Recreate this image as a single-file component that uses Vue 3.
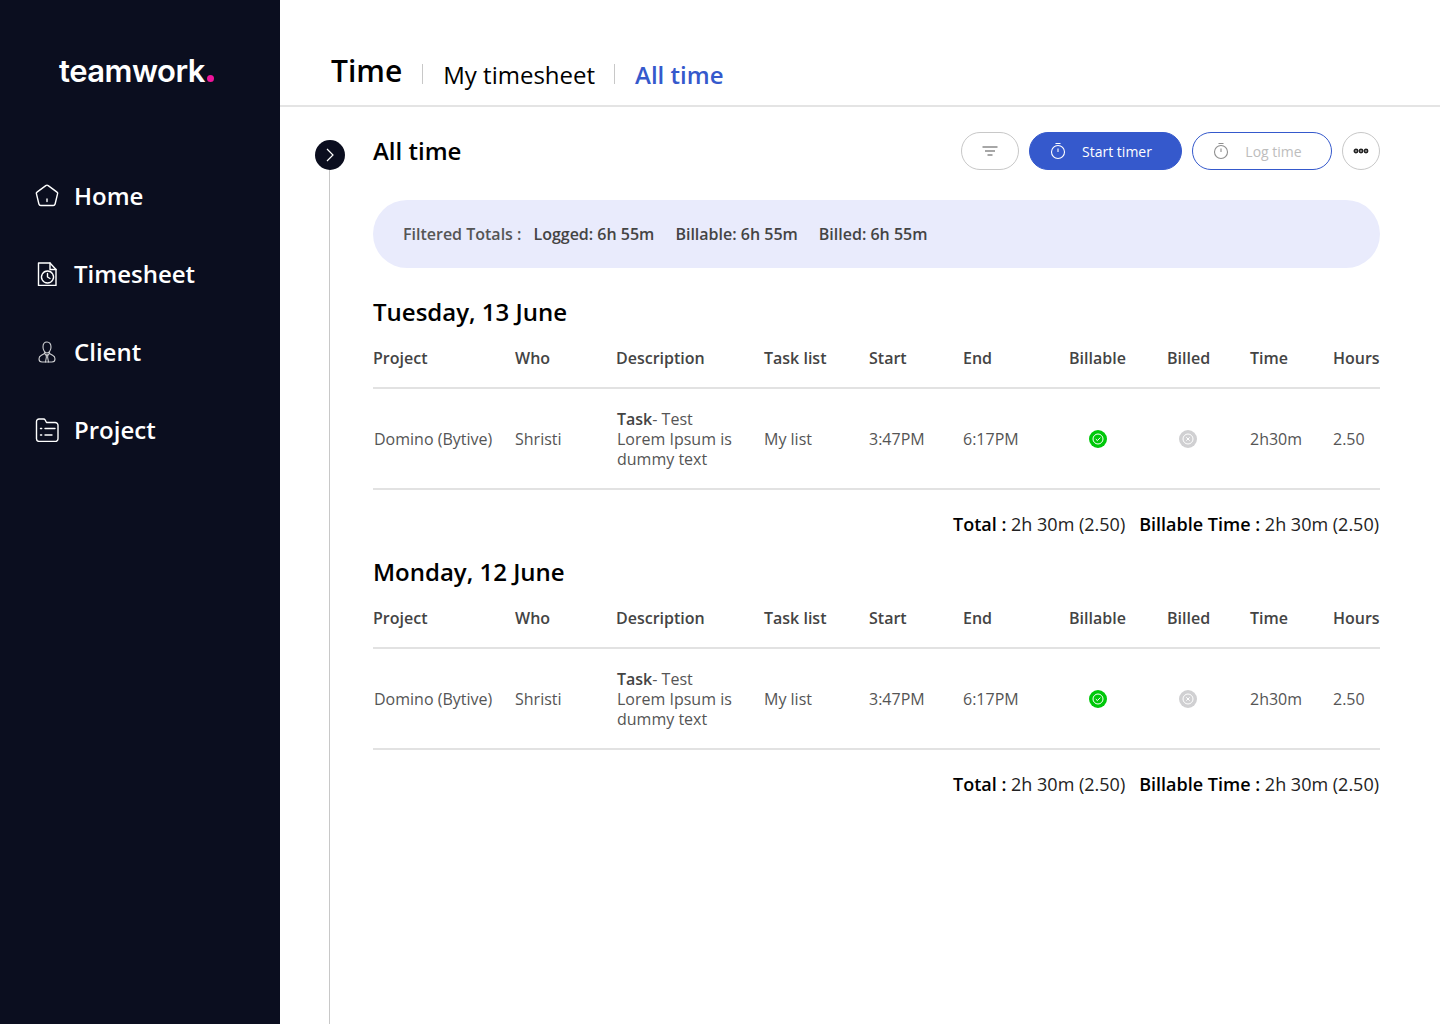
<template>
  <div class="page">
    <aside class="sidebar">
      <div class="logo">teamwork<span class="dot"></span></div>
      <nav class="nav">
        <a v-for="link in links" :key="link.name" class="nav_item">
          <svg class="nav_icon" :class="{ nav_icon_thin: link.thin }" viewBox="0 0 24 24" fill="none" stroke="#fff" stroke-linejoin="round" stroke-linecap="round">
            <path v-for="d in link.paths" :key="d" :d="d" />
          </svg>
          <span class="nav_label">{{ link.name }}</span>
        </a>
      </nav>
    </aside>

    <main class="main">
      <header class="top">
        <h1>Time</h1>
        <span class="tab tab_first">My timesheet</span>
        <span class="tab tab_active">All time</span>
      </header>

      <div class="body">
        <div class="rail">
          <div class="rail_btn">
            <svg width="10" height="14" viewBox="0 0 10 14" fill="none" stroke="#fff" stroke-width="1.2">
              <path d="M2 1l6 6-6 6" />
            </svg>
          </div>
          <div class="rail_line"></div>
        </div>

        <div class="content">
          <div class="title_row">
            <h2>All time</h2>
            <div class="actions">
              <button class="btn btn_filter">
                <svg width="16" height="12" viewBox="0 0 16 12" fill="none" stroke="#8a8a8a" stroke-width="1.3">
                  <path d="M.5 2h15M3 6h10M5.500 10h5" />
                </svg>
              </button>
              <button class="btn btn_start">
                <svg width="16" height="18" viewBox="0 0 16 18" fill="none" stroke="#fff" stroke-width="1.1">
                  <circle cx="8" cy="10" r="6.500" />
                  <path d="M5.500 1.500h5M8 6.500v3.500" />
                </svg>
                <span>Start timer</span>
              </button>
              <button class="btn btn_log">
                <svg width="16" height="18" viewBox="0 0 16 18" fill="none" stroke="#8f8f8f" stroke-width="1.1">
                  <circle cx="8" cy="10" r="6.500" />
                  <path d="M5.500 1.500h5M8 6.500v3.500" />
                </svg>
                <span>Log time</span>
              </button>
              <button class="btn btn_more">
                <svg width="16" height="6" viewBox="0 0 16 6" fill="none" stroke="#222" stroke-width="1.700">
                  <circle cx="3" cy="3" r="1.600" />
                  <circle cx="8" cy="3" r="1.600" />
                  <circle cx="13" cy="3" r="1.600" />
                </svg>
              </button>
            </div>
          </div>

          <div class="totals">
            <span class="totals_label">Filtered Totals :</span>
            <span class="totals_val">Logged: 6h 55m</span>
            <span class="totals_val">Billable: 6h 55m</span>
            <span class="totals_val">Billed: 6h 55m</span>
          </div>

          <section v-for="day in days" :key="day" class="day">
            <h3>{{ day }}</h3>
            <div class="grid head">
              <div v-for="col in columns" :key="col">{{ col }}</div>
            </div>
            <div class="grid row">
              <div class="c1">Domino (Bytive)</div>
              <div>Shristi</div>
              <div class="desc"><b>Task</b>- Test<br>Lorem Ipsum is<br>dummy text</div>
              <div>My list</div>
              <div>3:47PM</div>
              <div>6:17PM</div>
              <div class="status status_yes">
                <svg width="18" height="18" viewBox="0 0 18 18" fill="none">
                  <circle cx="9" cy="9" r="9" fill="#00c80a" />
                  <circle cx="9" cy="9" r="5" stroke="#fff" stroke-width="1" />
                  <path d="M6.800 9.100l1.600 1.500 2.900-3" stroke="#fff" stroke-width="1" />
                </svg>
              </div>
              <div class="status status_no">
                <svg width="18" height="18" viewBox="0 0 18 18" fill="none">
                  <circle cx="9" cy="9" r="9" fill="#d0d0d2" />
                  <circle cx="9" cy="9" r="5" stroke="#fff" stroke-width="1" />
                  <path d="M7.300 7.300l3.400 3.400M10.700 7.300l-3.400 3.400" stroke="#fff" stroke-width="1" />
                </svg>
              </div>
              <div>2h30m</div>
              <div>2.50</div>
            </div>
            <div class="day_total">
              <span><b>Total :</b> 2h 30m (2.50)</span>
              <span><b>Billable Time :</b> 2h 30m (2.50)</span>
            </div>
          </section>
        </div>
      </div>
    </main>
  </div>
</template>

<script setup>
const links = [
  { name: "Home", paths: ["M10.800 1.600a2 2 0 0 1 2.400 0l8.800 6.500a1.500 1.500 0 0 1 .6 1.600l-2.500 10.300A2 2 0 0 1 18.200 21.500H5.800a2 2 0 0 1-1.900-1.500L1.400 9.700a1.500 1.500 0 0 1 .6-1.600z", "M12 15v2.500"] },
  { name: "Timesheet", paths: ["M3.500 1h11.500l6 6.500V23.500H3.500z", "M15 1v6.500h6", "M12.500 9a6 6 0 1 0 .01 0z", "M12.500 11.500v3.500l2.500 1.500"] },
  { name: "Client", thin: true, paths: ["M12 2c-2.600 0-4 2.200-4 5s1.700 6 4 6 4-3.200 4-6-1.400-5-4-5z", "M9.500 12.500v1L6 15.500C4.500 16.300 4 17.800 4 19c0 1.800 1.200 3 3 3h10c1.800 0 3-1.200 3-3 0-1.200-.5-2.700-2-3.500l-3.500-2v-1", "M9.500 13.500l2.500 2 2.500-2", "M11 15l.4 2-.9 5M13 15l-.4 2 .9 5"] },
  { name: "Project", paths: ["M1.500 5V3.500A2.500 2.500 0 0 1 4 1h4.500a2 2 0 0 1 1.700 1l1.300 2.500H20A2.800 2.800 0 0 1 23 7.300v13.400A2.800 2.800 0 0 1 20 23.500H4a2.800 2.800 0 0 1-2.500-2.800z", "M5.500 10.500h1.200M10 10.500h10M5.500 17h1.200M10 17h7"] },
];

const days = ["Tuesday, 13 June", "Monday, 12 June"];
const columns = ["Project", "Who", "Description", "Task list", "Start", "End", "Billable", "Billed", "Time", "Hours"];
</script>

<style>
body {
  margin: 0;
  background: #fff;
}
</style>

<style scoped>
.page {
  display: flex;
  width: 1440px;
  height: 1024px;
  overflow: hidden;
  font-family: "Open Sans", sans-serif;
  color: #000;
}
.sidebar {
  width: 280px;
  flex-shrink: 0;
  background: #0b0e1f;
  color: #fff;
}
.logo {
  display: flex;
  align-items: baseline;
  padding: 52px 0 0 59px;
  height: 37px;
  font-family: "Inter", sans-serif;
  font-size: 31px;
  line-height: 37px;
  font-weight: 600;
  letter-spacing: -0.5px;
}
.dot {
  width: 7px;
  height: 7px;
  margin-left: 2px;
  border-radius: 50%;
  background: #f0149b;
}
.nav {
  display: flex;
  flex-direction: column;
  gap: 38px;
  margin-top: 87px;
  padding-left: 35px;
}
.nav_item {
  display: flex;
  align-items: center;
  gap: 15px;
  height: 40px;
  font-size: 24px;
  font-weight: 600;
}
.nav_label {
  margin-top: -2px;
}
.nav_icon {
  width: 24px;
  height: 24px;
  stroke-width: 1.4;
}
.nav_icon_thin {
  stroke-width: 1.1;
  opacity: 0.8;
}
.main {
  flex: 1;
  display: flex;
  flex-direction: column;
  min-width: 0;
}
.top {
  display: flex;
  align-items: flex-start;
  box-sizing: border-box;
  padding: 50px 0 0 51px;
  border-bottom: 2px solid #e4e4e4;
  height: 107px;
}
h1 {
  margin: 0;
  font-size: 30px;
  line-height: 42px;
  font-weight: 600;
}
.tab {
  position: relative;
  font-size: 24px;
  line-height: 40px;
  margin-top: 5px;
  padding-left: 21px;
  margin-left: 20px;
}
.tab::before {
  content: "";
  position: absolute;
  left: 0;
  top: 9px;
  height: 20px;
  width: 1px;
  background: #c8c8c8;
}
.tab_active {
  margin-left: 19px;
  color: #3559cc;
  font-weight: 600;
}
.body {
  flex: 1;
  display: flex;
  min-height: 0;
}
.rail {
  width: 93px;
  flex-shrink: 0;
  display: flex;
  flex-direction: column;
  align-items: center;
  padding: 33px 0 0 6px;
  box-sizing: border-box;
}
.rail_btn {
  width: 30px;
  height: 30px;
  flex-shrink: 0;
  border-radius: 50%;
  background: #0b0e1f;
  display: flex;
  align-items: center;
  justify-content: center;
}
.rail_line {
  flex: 1;
  width: 1px;
  background: #c8c8c8;
}
.content {
  width: 1007px;
}
.title_row {
  display: flex;
  justify-content: space-between;
  align-items: center;
  height: 38px;
  margin-top: 25px;
}
h2 {
  margin: -2px 0 0;
  font-size: 24px;
  font-weight: 600;
}
.actions {
  display: flex;
  gap: 10px;
}
.btn {
  display: flex;
  align-items: center;
  justify-content: center;
  height: 38px;
  box-sizing: border-box;
  padding: 0;
  border-radius: 19px;
  border: 1px solid #c8c8c8;
  background: #fff;
  font-family: inherit;
  font-size: 14px;
}
.btn_filter {
  width: 58px;
}
.btn_start {
  width: 153px;
  gap: 16px;
  padding-right: 9px;
  background: #3559cc;
  border-color: #3559cc;
  color: #fff;
}
.btn_log {
  width: 140px;
  gap: 16px;
  padding-right: 9px;
  border-color: #3559cc;
  color: #bdbdbd;
}
.btn_more {
  width: 38px;
}
.totals {
  display: flex;
  align-items: center;
  height: 68px;
  margin-top: 30px;
  padding-left: 30px;
  border-radius: 34px;
  background: #e9ebfc;
  font-size: 16px;
  color: #444;
}
.totals_label {
  font-weight: 600;
  color: #555;
  margin-right: 12px;
}
.totals_val {
  font-weight: 600;
  margin-right: 21px;
}
.day {
  margin-top: 25px;
}
.day + .day {
  margin-top: 16px;
}
h3 {
  margin: 0;
  font-size: 24px;
  line-height: 38px;
  font-weight: 600;
}
.grid {
  display: grid;
  grid-template-columns: 142px 101px 148px 105px 94px 106px 98px 83px 83px 47px;
  align-items: center;
}
.head {
  height: 58px;
  box-sizing: border-box;
  padding-bottom: 3px;
  border-bottom: 2px solid #e2e2e2;
  font-size: 16px;
  font-weight: 600;
  color: #444;
  white-space: nowrap;
}
.row {
  height: 101px;
  box-sizing: border-box;
  border-bottom: 2px solid #e2e2e2;
  font-size: 16px;
  line-height: 20px;
  color: #555;
  white-space: nowrap;
}
.c1,
.desc {
  padding-left: 1px;
}
.desc b {
  font-weight: 600;
  color: #444;
}
.status {
  display: flex;
}
.status_yes {
  padding-left: 20px;
}
.status_no {
  padding-left: 12px;
}
.day_total {
  display: flex;
  justify-content: flex-end;
  gap: 14px;
  margin-top: 21px;
  padding-right: 1px;
  font-size: 18px;
  line-height: 26px;
  color: #222;
}
.day_total b {
  font-weight: 600;
  color: #000;
}
</style>
